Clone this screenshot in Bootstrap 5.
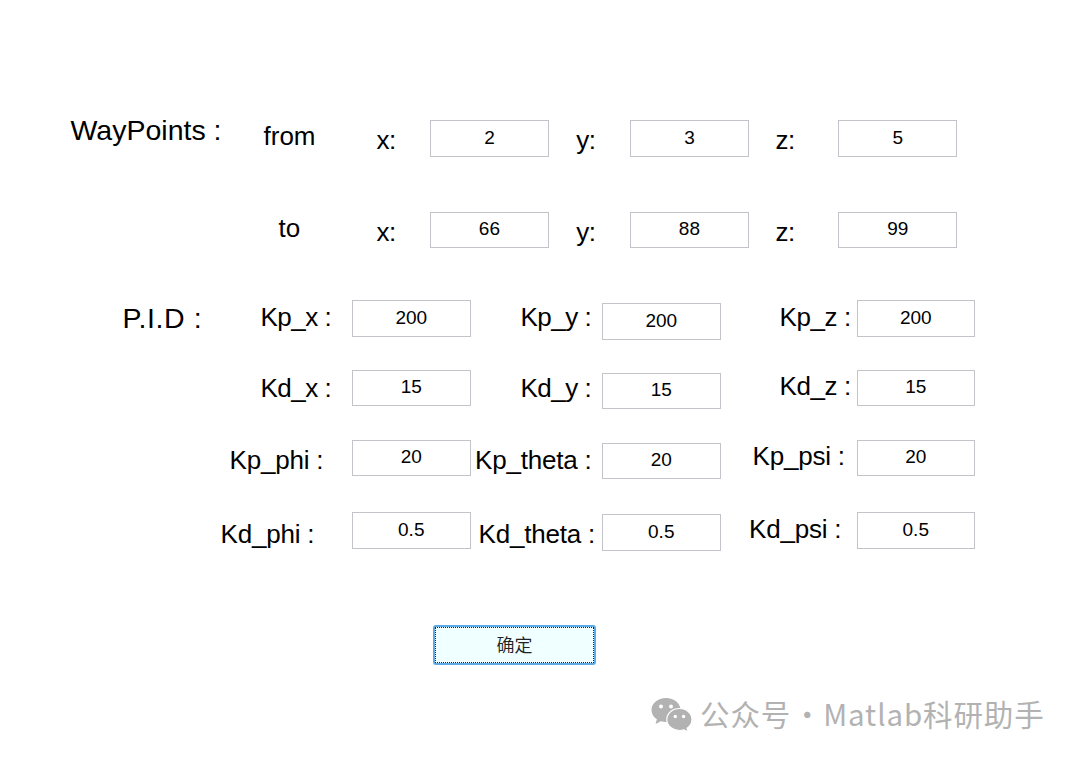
<!DOCTYPE html>
<html lang="zh">
<head>
  <meta charset="UTF-8">
  <meta name="viewport" content="width=device-width, initial-scale=1">
  <title>WayPoints / PID</title>
  <link href="https://cdn.jsdelivr.net/npm/bootstrap@5.3.0/dist/css/bootstrap.min.css" rel="stylesheet">
  <style>
    body {
      width: 1080px;
      height: 759px;
      overflow: hidden;
      background: #fff;
      color: #000;
      font-family: "Liberation Sans", "Noto Sans CJK SC", sans-serif;
    }
    .params { padding-top: 120px; height: 625px; }
    .params-row { display: grid; align-items: start; }
    .way-row {
      height: 91.5px;
      margin-left: 70.5px;
      grid-template-columns: 193px 113px 53.7px 146px 54px 145.3px 63px 119px;
    }
    .way-row.last-way { height: 88.5px; }
    .pid-row {
      height: 69.5px;
      margin-left: 122.5px;
      grid-template-columns: 98px 131.5px 119px 131px 119px 135.5px 119px;
    }
    .pid-row.next-row { height: 70px; }
    .pid-row.tall-row { height: 72.5px; }
    .params-row label, .params-row h2 {
      font-size: 26px;
      line-height: 30px;
      font-weight: 400;
      margin: 0;
      white-space: nowrap;
    }
    .way-row label[for] { letter-spacing: -.5px; }
    .pid-row label { letter-spacing: -.2px; }
    .params-row h2 { font-size: 28.5px; }
    .pid-row h2 { letter-spacing: .6px; }
    .params-row .form-control {
      width: 118.5px;
      height: 36.5px;
      padding: 0 0 1px;
      border: 1px solid #c3c3ca;
      border-radius: 0;
      font-size: 19px;
      line-height: 1;
      color: #000;
      text-align: center;
    }
    /* vertical nudges of the labels and fields */
    .params-row .up-5 { margin-top: -5.5px; }
    .params-row .dn-1 { margin-top: 1px; }
    .params-row .dn-2 { margin-top: 2px; }
    .params-row .dn-3 { margin-top: 3px; }
    .params-row .dn-5 { margin-top: 5px; }
    .params-row .dn-7 { margin-top: 7px; }
    /* label indents */
    .params-row .in-to { padding-left: 15px; }
    .params-row .in-x { padding-left: 40px; letter-spacing: -.5px; }
    .params-row .in-phi { padding-left: 9px; }
    .params-row .in-y { padding-left: 49.5px; letter-spacing: -.5px; }
    .params-row .in-theta { padding-left: 4px; }
    .params-row .in-theta-d { padding-left: 7.5px; }
    .params-row .in-z { padding-left: 58.5px; letter-spacing: -.4px; }
    .params-row .in-psi { padding-left: 31.5px; }
    .params-row .in-psi-d { padding-left: 28px; }

    .btn.btn-ok {
      width: 163px;
      height: 40px;
      margin-left: 433px;
      padding: 0;
      border: 2px solid #5cabe8;
      border-radius: 3px;
      background: #f0ffff;
    }
    .btn-ok span {
      display: block;
      height: 36px;
      border: 1px dotted #222;
      color: #222;
      font: 350 18px/33px "Noto Sans CJK SC", sans-serif;
    }
    .watermark {
      padding-left: 651px;
      margin-top: 27px;
      height: 44px;
      color: #b2b2b2;
      font: 400 29.5px/44px "Noto Sans CJK SC", sans-serif;
      letter-spacing: .9px;
      white-space: nowrap;
    }
    .watermark svg { width: 42px; height: 36px; margin-top: 1px; }
    .watermark span { margin-top: -2px; }
    .wm-name { margin-left: 7px; }
    .wm-dot { width: 32px; text-align: center; letter-spacing: 0; }
  </style>
</head>
<body>
  <form class="params">
    <div class="params-row way-row">
      <h2 class="up-5">WayPoints :</h2>
      <label class="dn-1">from</label>
      <label class="dn-5" for="x0">x:</label>
      <input class="form-control" id="x0" value="2">
      <label class="dn-5" for="y0">y:</label>
      <input class="form-control" id="y0" value="3">
      <label class="dn-5" for="z0">z:</label>
      <input class="form-control" id="z0" value="5">
    </div>
    <div class="params-row way-row last-way">
      <span></span>
      <label class="dn-1 in-to">to</label>
      <label class="dn-5" for="x1">x:</label>
      <input class="form-control" id="x1" value="66">
      <label class="dn-5" for="y1">y:</label>
      <input class="form-control" id="y1" value="88">
      <label class="dn-5" for="z1">z:</label>
      <input class="form-control" id="z1" value="99">
    </div>

    <div class="params-row pid-row">
      <h2 class="dn-3">P.I.D :</h2>
      <label class="dn-2 in-x" for="kpx">Kp_x :</label>
      <input class="form-control" id="kpx" value="200">
      <label class="dn-2 in-y" for="kpy">Kp_y :</label>
      <input class="form-control dn-3" id="kpy" value="200">
      <label class="dn-2 in-z" for="kpz">Kp_z :</label>
      <input class="form-control" id="kpz" value="200">
    </div>
    <div class="params-row pid-row next-row">
      <span></span>
      <label class="dn-3 in-x" for="kdx">Kd_x :</label>
      <input class="form-control" id="kdx" value="15">
      <label class="dn-3 in-y" for="kdy">Kd_y :</label>
      <input class="form-control dn-3" id="kdy" value="15">
      <label class="dn-1 in-z" for="kdz">Kd_z :</label>
      <input class="form-control" id="kdz" value="15">
    </div>
    <div class="params-row pid-row tall-row">
      <span></span>
      <label class="dn-5 in-phi" for="kpphi">Kp_phi :</label>
      <input class="form-control" id="kpphi" value="20">
      <label class="dn-5 in-theta" for="kptheta">Kp_theta :</label>
      <input class="form-control dn-3" id="kptheta" value="20">
      <label class="dn-1 in-psi" for="kppsi">Kp_psi :</label>
      <input class="form-control" id="kppsi" value="20">
    </div>
    <div class="params-row pid-row">
      <span></span>
      <label class="dn-7" for="kdphi">Kd_phi :</label>
      <input class="form-control" id="kdphi" value="0.5">
      <label class="dn-7 in-theta-d" for="kdtheta">Kd_theta :</label>
      <input class="form-control dn-2" id="kdtheta" value="0.5">
      <label class="dn-2 in-psi-d" for="kdpsi">Kd_psi :</label>
      <input class="form-control" id="kdpsi" value="0.5">
    </div>
  </form>

  <button type="button" class="btn btn-ok d-block"><span>确定</span></button>

  <div class="watermark d-flex align-items-center">
    <svg viewBox="0 0 42 36" fill="#b2b2b2">
      <path d="M15 1C7 1 .5 6.200.5 13c0 4 2 7 5.400 9.300L4.500 27l5.400-2.800c1.700.5 3.300.7 5.100.7 8 0 14.500-5.200 14.500-12S23 1 15 1z"/>
      <path d="M28.500 11.500c-7 0-12.700 4.800-12.700 11s5.700 11 12.700 11c1.600 0 3-.2 4.400-.7l4.400 2.200-1.200-3.700c3.100-2.100 4.900-5.100 4.900-8.800 0-6.200-5.500-11-12.500-11z" stroke="#fff" stroke-width="1.200"/>
      <g fill="#fff">
        <circle cx="10" cy="9.500" r="2"/>
        <circle cx="20" cy="9.500" r="2"/>
        <circle cx="24.300" cy="19.500" r="1.700"/>
        <circle cx="32.600" cy="19.500" r="1.700"/>
      </g>
    </svg>
    <span class="wm-name">公众号</span>
    <span class="wm-dot">·</span>
    <span>Matlab科研助手</span>
  </div>

  <script src="https://cdn.jsdelivr.net/npm/bootstrap@5.3.0/dist/js/bootstrap.bundle.min.js"></script>
</body>
</html>
